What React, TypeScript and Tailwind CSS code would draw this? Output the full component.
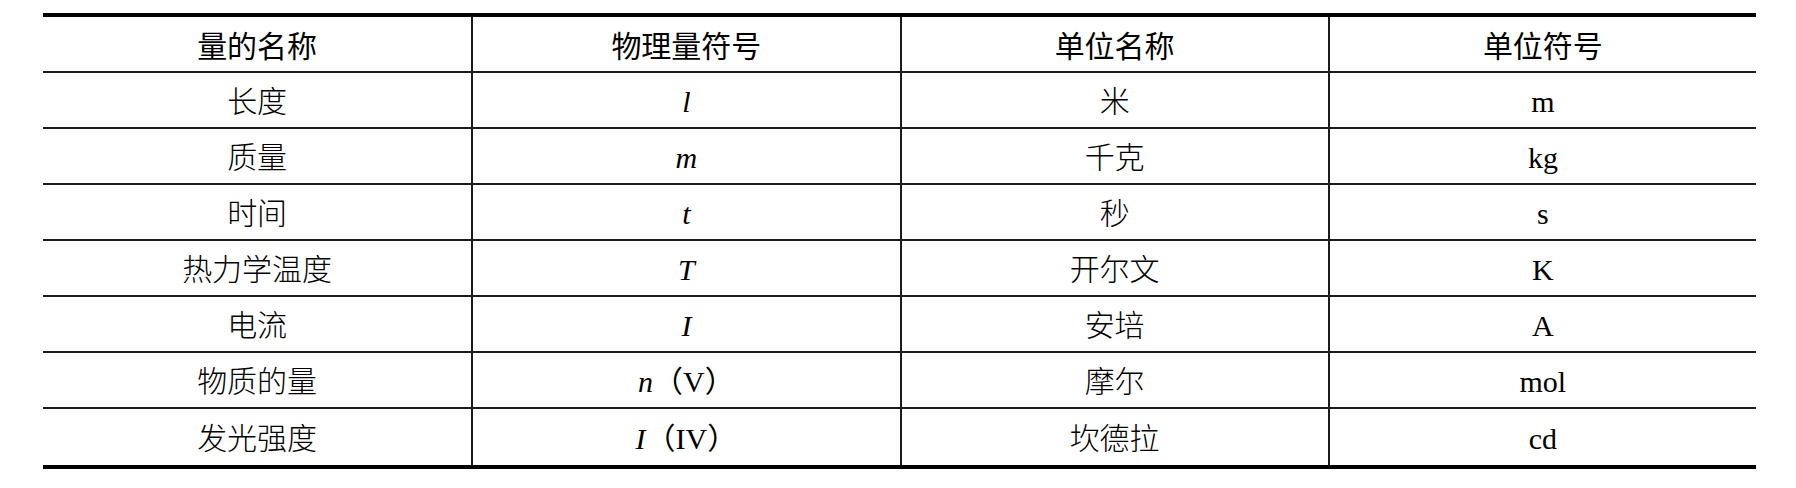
import React from "react";

type Cell = React.ReactNode;

const rows: Cell[][] = [
  ["长度", <i key="a">l</i>, "米", "m"],
  ["质量", <i key="a">m</i>, "千克", "kg"],
  ["时间", <i key="a">t</i>, "秒", "s"],
  ["热力学温度", <i key="a">T</i>, "开尔文", "K"],
  ["电流", <i key="a">I</i>, "安培", "A"],
  [
    "物质的量",
    <span key="a">
      <i>n</i>（V）
    </span>,
    "摩尔",
    "mol",
  ],
  [
    "发光强度",
    <span key="a">
      <i>I</i>（IV）
    </span>,
    "坎德拉",
    "cd",
  ],
];

const headers = ["量的名称", "物理量符号", "单位名称", "单位符号"];

export default function App() {
  return (
    <div className="w-[1796px] h-[488px] bg-white pl-[43px] pt-[13px]">
      <div className="w-[1713px] border-t-4 border-b-4 border-black text-black">
        <div className="grid grid-cols-4 h-[56px] border-b-2 border-[#1c1c1c]">
          {headers.map((h, i) => (
            <div
              key={i}
              className={`flex items-center justify-center text-[30px] leading-none font-['Noto_Sans_CJK_SC',sans-serif] ${
                i > 0 ? "border-l-2 border-[#1c1c1c]" : ""
              }`}
            >
              {h}
            </div>
          ))}
        </div>
        {rows.map((r, ri) => (
          <div
            key={ri}
            className={`grid grid-cols-4 h-[56px] ${
              ri < rows.length - 1 ? "border-b-2 border-[#1c1c1c]" : ""
            }`}
          >
            {r.map((c, ci) => (
              <div
                key={ci}
                className={`flex items-center justify-center pt-[3px] text-[30px] leading-none font-['Liberation_Serif','Noto_Sans_CJK_SC',serif] ${
                  ci === 0 || ci === 2 ? "font-light" : ""
                } ${ci > 0 ? "border-l-2 border-[#1c1c1c]" : ""}`}
              >
                {c}
              </div>
            ))}
          </div>
        ))}
      </div>
    </div>
  );
}
